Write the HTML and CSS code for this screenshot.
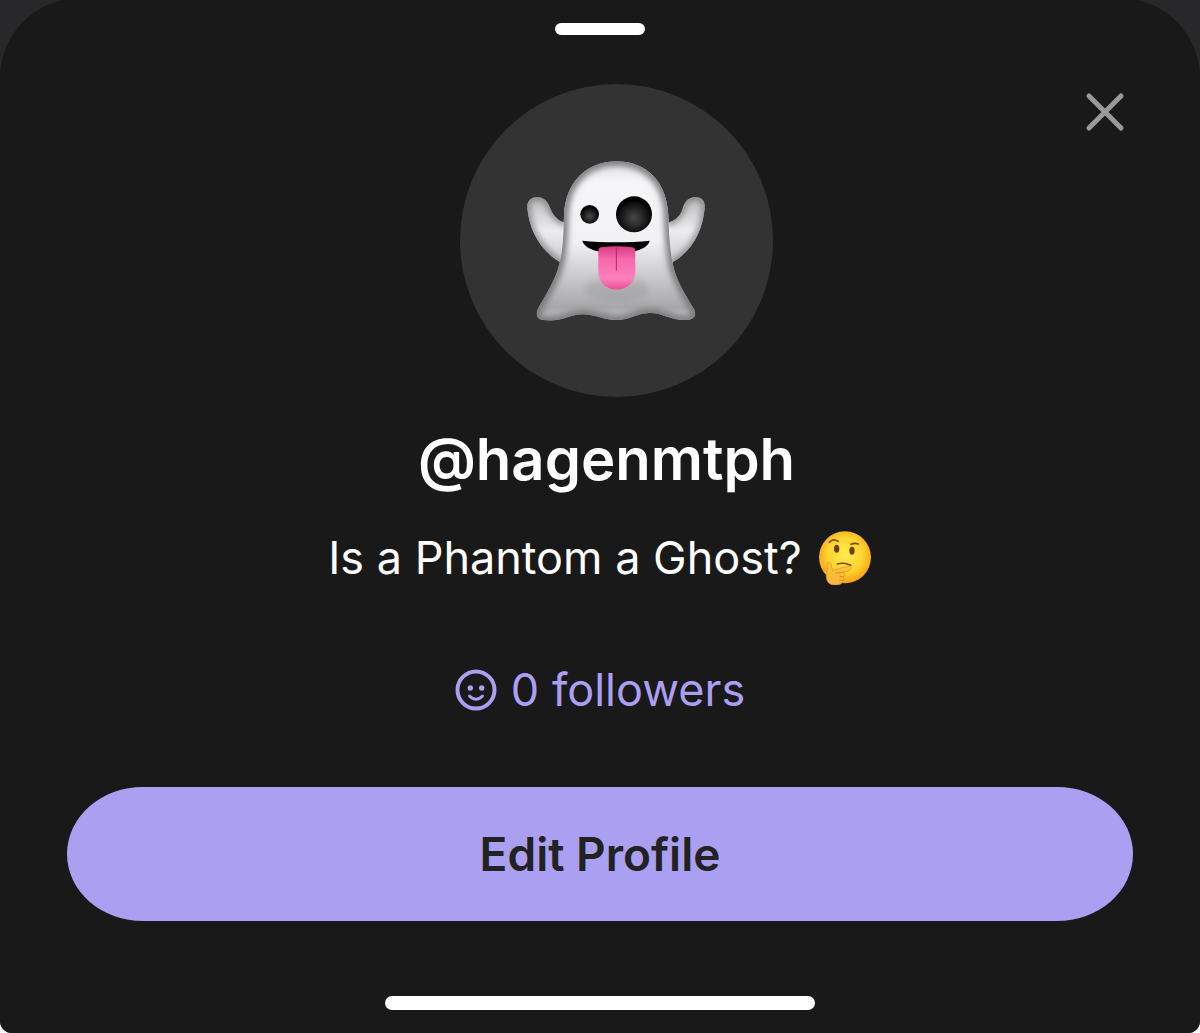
FILE: index.html
```html
<!DOCTYPE html>
<html lang="en">
<head>
  <meta charset="UTF-8" />
  <title>@hagenmtph</title>
  <meta name="viewport" content="width=device-width,initial-scale=1" />
  <link rel="stylesheet" href="styles.css">
</head>
<body>
  <div class="screen">
    <main class="sheet">
      <div class="grabber"></div>

      <header class="sheet-header">
        <div class="avatar">
          <svg class="ghost" viewBox="6 0 630 600" role="img" aria-label="Ghost">
            <defs>
              <linearGradient id="bodyFill" x1="0" y1="0" x2="0" y2="1">
                <stop offset="0" stop-color="#dcdce0" />
                <stop offset="0.15" stop-color="#f6f6f9" />
                <stop offset="0.5" stop-color="#f2f2f5" />
                <stop offset="0.72" stop-color="#c9c9cb" />
                <stop offset="0.9" stop-color="#a8a8aa" />
                <stop offset="1" stop-color="#dcdcde" />
              </linearGradient>
              <linearGradient id="armFill" x1="0" y1="0" x2="0" y2="1">
                <stop offset="0" stop-color="#b4b4b6" />
                <stop offset="0.5" stop-color="#ededf0" />
                <stop offset="1" stop-color="#c4c4c7" />
              </linearGradient>
              <radialGradient id="eyeFill" cx="0.5" cy="0.6" r="0.5">
                <stop offset="0" stop-color="#4a4a4a" />
                <stop offset="0.8" stop-color="#111" />
                <stop offset="1" stop-color="#000" />
              </radialGradient>
              <linearGradient id="tongueFill" x1="0" y1="0" x2="0" y2="1">
                <stop offset="0" stop-color="#d83a83" />
                <stop offset="0.3" stop-color="#f768ab" />
                <stop offset="0.75" stop-color="#fb80bb" />
                <stop offset="1" stop-color="#ec4c97" />
              </linearGradient>
              <filter id="soft" x="-20%" y="-20%" width="140%" height="140%">
                <feGaussianBlur stdDeviation="10" />
              </filter>
              <clipPath id="bodyClip">
                <path d="M320 61C228 61 166 126 162 222C160 292 158 338 144 384C128 434 96 478 82 508C76 526 84 537 108 538C158 542 184 518 222 520C262 523 284 537 320 537C358 537 378 518 418 516C454 514 480 538 528 537C552 536 560 524 554 508C534 472 504 430 492 384C480 338 477 282 475 222C471 126 412 61 320 61Z" />
              </clipPath>
              <clipPath id="armClip">
                <path d="M166 246C140 238 128 222 118 196C110 174 94 167 77 169C59 171 50 184 52 203C58 264 90 332 158 368ZM472 246C500 238 514 222 520 196C528 174 544 167 561 169C579 171 586 184 584 203C578 264 550 332 480 368Z" />
              </clipPath>
            </defs>
            <g clip-path="url(#armClip)">
              <rect x="40" y="160" width="560" height="220" fill="url(#armFill)" />
              <path d="M166 246C140 238 128 222 118 196C110 174 94 167 77 169C59 171 50 184 52 203C58 264 90 332 158 368M472 246C500 238 514 222 520 196C528 174 544 167 561 169C579 171 586 184 584 203C578 264 550 332 480 368" fill="none" stroke="#77777a" stroke-width="14" filter="url(#soft)" />
            </g>
            <g clip-path="url(#bodyClip)">
              <rect x="70" y="50" width="500" height="500" fill="url(#bodyFill)" />
              <path d="M320 61C228 61 166 126 162 222C160 292 158 338 144 384C128 434 96 478 82 508C76 526 84 537 108 538C158 542 184 518 222 520C262 523 284 537 320 537C358 537 378 518 418 516C454 514 480 538 528 537C552 536 560 524 554 508C534 472 504 430 492 384C480 338 477 282 475 222C471 126 412 61 320 61Z" fill="none" stroke="#77777a" stroke-width="26" filter="url(#soft)" />
              <ellipse cx="320" cy="445" rx="96" ry="36" fill="#8a8a8c" opacity="0.3" filter="url(#soft)" />
            </g>
            <circle cx="239" cy="220" r="28" fill="url(#eyeFill)" />
            <circle cx="372" cy="220" r="54" fill="url(#eyeFill)" />
            <path d="M217 299C280 305 358 305 419 299C414 323 372 336 318 336C264 336 223 323 217 299Z" fill="#000" />
            <path d="M265 330Q265 320 275 319Q320 312 365 319Q376 320 376 330V391C376 425 352 446 320 446C288 446 265 425 265 391Z" fill="url(#tongueFill)" />
            <path d="M319 320V388" stroke="#b3246a" stroke-width="3" stroke-linecap="round" />
          </svg>
        </div>
        <button class="close" type="button" aria-label="Close">
          <svg viewBox="0 0 56 56" aria-hidden="true">
            <path d="M12 12L44 44M44 12L12 44" />
          </svg>
        </button>
      </header>

      <h1 class="username">@hagenmtph</h1>

      <p class="bio">
        <span>Is a Phantom a Ghost?</span>
        <svg class="thinking" viewBox="0 0 162 162" role="img" aria-label="Thinking face">
          <defs>
            <radialGradient id="faceFill" cx="0.5" cy="0.45" r="0.55">
              <stop offset="0" stop-color="#ffec4f" />
              <stop offset="0.6" stop-color="#ffd52f" />
              <stop offset="1" stop-color="#f6a11c" />
            </radialGradient>
            <linearGradient id="handFill" x1="0" y1="0" x2="0" y2="1">
              <stop offset="0" stop-color="#ffc838" />
              <stop offset="1" stop-color="#f9b43a" />
            </linearGradient>
          </defs>
          <circle cx="81" cy="79" r="78" fill="url(#faceFill)" />
          <g fill="none" stroke="#7c4a0c" stroke-width="5" stroke-linecap="round">
            <path d="M34 34Q45 21 61 31" />
            <path d="M99 40Q109 35 121 39" />
            <path d="M58 99Q79 93 98 103" />
          </g>
          <ellipse cx="56" cy="53" rx="8" ry="12" fill="#6b400b" />
          <ellipse cx="102" cy="59" rx="8" ry="12" fill="#6b400b" />
          <path d="M27 101C26 93 36 91 39 99L44 119C57 115 72 109 91 106C102 105 103 115 93 118L74 124C84 125 81 133 77 136C79 146 75 160 57 162C38 164 25 155 25 137C25 125 30 116 27 101Z" fill="url(#handFill)" stroke="#e08d1c" stroke-width="2" />
          <path d="M53 126Q64 126 74 124M66 137H77M65 148H75" fill="none" stroke="#e08d1c" stroke-width="3" stroke-linecap="round" />
        </svg>
      </p>

      <a class="followers" href="#followers">
        <svg class="smiley" viewBox="0 0 42 42" aria-hidden="true">
          <circle class="ring" cx="21" cy="21" r="18.500" />
          <path class="smile" d="M14.500 27Q21 33.500 27.500 27" />
          <circle class="dot" cx="15.300" cy="19" r="2.700" />
          <circle class="dot" cx="26.700" cy="19" r="2.700" />
        </svg>
        <span>0 followers</span>
      </a>

      <button class="edit-profile" type="button">Edit Profile</button>

      <div class="home-indicator"></div>
    </main>
  </div>
</body>
</html>
```
FILE: styles.css
```css
:root {
  --sheet: #191919;
  --backdrop: #28282a;
  --avatar: #333333;
  --accent: #ab9ff2;
  --muted: #999999;
}
* {
  box-sizing: border-box;
}
body {
  margin: 0;
  background: #fff;
  color: #fff;
  font-family: Inter, "Liberation Sans", sans-serif;
}
.screen {
  min-height: 100vh;
  background: var(--backdrop);
  border-radius: 0 0 12px 12px;
  overflow: hidden;
  display: flex;
}
.sheet {
  flex: 1;
  display: flex;
  flex-direction: column;
  align-items: center;
  margin-top: -2px;
  padding: 25px 67px 23px;
  background: var(--sheet);
  border-radius: 80px 80px 0 0;
}
.grabber {
  width: 90px;
  height: 12px;
  border-radius: 6px;
  background: #fff;
}
.sheet-header {
  align-self: stretch;
  display: grid;
  grid-template-columns: 1fr auto 1fr;
  margin-top: 49px;
  padding-left: 33px;
}
.avatar {
  grid-column: 2;
  width: 313px;
  height: 313px;
  border-radius: 50%;
  background: var(--avatar);
  display: flex;
  align-items: center;
  justify-content: center;
}
.ghost {
  width: 210px;
  height: 200px;
}
.close {
  justify-self: end;
  width: 56px;
  height: 56px;
  padding: 0;
  border: none;
  background: none;
  cursor: pointer;
}
.close svg {
  display: block;
  fill: none;
  stroke: var(--muted);
  stroke-width: 5;
  stroke-linecap: round;
}
.username {
  margin: 26px 0 0;
  padding-left: 13px;
  font-size: 58px;
  line-height: 72px;
  font-weight: 600;
}
.bio {
  display: flex;
  align-items: center;
  gap: 16px;
  margin: 33px 0 0;
  font-size: 45px;
  line-height: 60px;
}
.thinking {
  width: 54px;
  height: 54px;
}
.followers {
  display: flex;
  align-items: center;
  gap: 14px;
  margin-top: 72px;
  color: var(--accent);
  font-size: 45px;
  line-height: 60px;
  text-decoration: none;
}
.smiley {
  width: 42px;
  height: 42px;
}
.smiley .ring,
.smiley .smile {
  fill: none;
  stroke: currentColor;
  stroke-width: 4;
  stroke-linecap: round;
}
.smiley .smile {
  stroke-width: 3;
}
.smiley .dot {
  fill: currentColor;
}
.edit-profile {
  align-self: stretch;
  height: 134px;
  margin-top: 67px;
  border: none;
  border-radius: 76px / 67px;
  background: var(--accent);
  color: #222;
  font-family: inherit;
  font-size: 46px;
  font-weight: 600;
  cursor: pointer;
}
.home-indicator {
  width: 430px;
  max-width: 100%;
  height: 14px;
  margin-top: 75px;
  border-radius: 7px;
  background: #fff;
}
```
